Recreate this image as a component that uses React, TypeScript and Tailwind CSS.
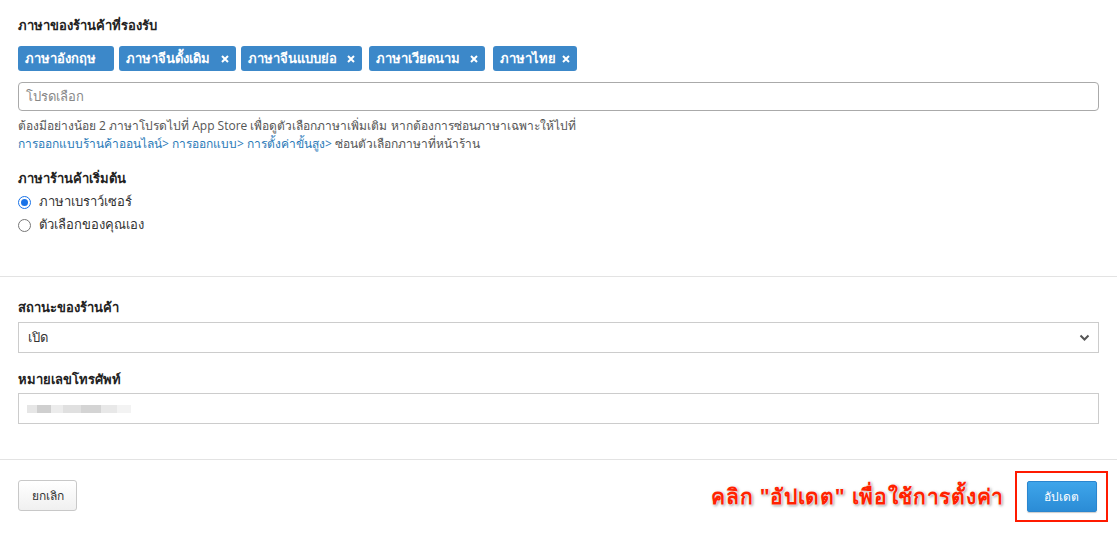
import React from "react";

const tags = [
  { label: "ภาษาอังกฤษ", removable: false, w: "w-[96px]", ml: "ml-0" },
  { label: "ภาษาจีนดั้งเดิม", removable: true, w: "w-[117px]", ml: "ml-[5px]" },
  { label: "ภาษาจีนแบบย่อ", removable: true, w: "w-[121px]", ml: "ml-[5px]" },
  { label: "ภาษาเวียดนาม", removable: true, w: "w-[116px]", ml: "ml-[7px]" },
  { label: "ภาษาไทย", removable: true, w: "w-[84px]", ml: "ml-[8px]" },
];

export default function App() {
  return (
    <div
      className="w-[1117px] h-[533px] bg-white text-[#333] overflow-hidden"
      style={{ fontFamily: '"Open Sans", "Noto Sans", sans-serif' }}
    >
      {/* Section 1 */}
      <div className="pl-[18px] pr-[18px] pt-[16px] h-[276px]">
        <div className="text-[13px] font-bold leading-[18px] text-[#222]">ภาษาของร้านค้าที่รองรับ</div>
        <div className="mt-[12px] flex h-[25px]">
          {tags.map((t, i) => (
            <div
              key={i}
              className={`${t.w} ${t.ml} h-[25px] rounded-[3px] bg-[#3c88c9] text-white text-[13px] font-semibold flex items-center pl-[7px] pr-[7px] justify-between`}
            >
              <span>{t.label}</span>
              {t.removable && (
                <svg width="8" height="8" viewBox="0 0 8 8">
                  <path d="M1 1 L7 7 M7 1 L1 7" stroke="#fff" strokeWidth="2" />
                </svg>
              )}
            </div>
          ))}
        </div>
        <div className="mt-[11px] h-[29px] w-[1081px] rounded-[4px] border border-[#aaa] flex items-center px-[7px] text-[13px] text-[#888]">
          โปรดเลือก
        </div>
        <div className="mt-[6px] text-[12px] leading-[18px] text-[#555]">
          <div>ต้องมีอย่างน้อย 2 ภาษาโปรดไปที่ App Store เพื่อดูตัวเลือกภาษาเพิ่มเติม หากต้องการซ่อนภาษาเฉพาะให้ไปที่</div>
          <div>
            <span className="text-[#2a7ab8]">การออกแบบร้านค้าออนไลน์&gt; การออกแบบ&gt; การตั้งค่าขั้นสูง&gt;</span> ซ่อนตัวเลือกภาษาที่หน้าร้าน
          </div>
        </div>
        <div className="mt-[16px] text-[13px] font-bold leading-[18px] text-[#222]">ภาษาร้านค้าเริ่มต้น</div>
        <div className="mt-[6px] flex flex-col gap-[5px] text-[13px]">
          <label className="flex items-center gap-[8px] h-[18px]">
            <span className="w-[13px] h-[13px] rounded-full border-[1.5px] border-[#1a73e8] flex items-center justify-center">
              <span className="w-[7px] h-[7px] rounded-full bg-[#1a73e8]" />
            </span>
            <span>ภาษาเบราว์เซอร์</span>
          </label>
          <label className="flex items-center gap-[8px] h-[18px]">
            <span className="w-[13px] h-[13px] rounded-full border border-[#777]" />
            <span>ตัวเลือกของคุณเอง</span>
          </label>
        </div>
      </div>
      <div className="h-px bg-[#e3e3e3]" />
      {/* Section 2 */}
      <div className="pl-[18px] pr-[18px] pt-[21px] h-[182px]">
        <div className="text-[13px] font-bold leading-[18px] text-[#222]">สถานะของร้านค้า</div>
        <div className="mt-[6px] h-[31px] w-[1081px] border border-[#ccc] flex items-center justify-between pl-[9px] pr-[8px] text-[13px]">
          <span>เปิด</span>
          <svg width="11" height="8" viewBox="0 0 11 8">
            <path d="M1.5 1.5 L5.5 5.5 L9.5 1.5" fill="none" stroke="#555" strokeWidth="2" />
          </svg>
        </div>
        <div className="mt-[17px] text-[13px] font-bold leading-[18px] text-[#222]">หมายเลขโทรศัพท์</div>
        <div className="mt-[5px] h-[31px] w-[1081px] border border-[#ccc] flex items-center pl-[8px]">
          <div className="flex h-[10px] items-center">
            <div className="w-[10px] h-[8px] bg-[#e6e6e6]" />
            <div className="w-[14px] h-[8px] bg-[#cfcfcf]" />
            <div className="w-[12px] h-[8px] bg-[#ececec]" />
            <div className="w-[18px] h-[8px] bg-[#e0e0e0]" />
            <div className="w-[20px] h-[8px] bg-[#d4d4d4]" />
            <div className="w-[16px] h-[8px] bg-[#e8e8e8]" />
            <div className="w-[14px] h-[8px] bg-[#f3f3f3]" />
          </div>
        </div>
      </div>
      <div className="h-px bg-[#e3e3e3]" />
      {/* Footer */}
      <div className="pl-[18px] pr-[18px] pt-[11px] flex items-start justify-between">
        <button className="mt-[9px] w-[59px] h-[31px] rounded-[3px] border border-[#c8c8c8] bg-gradient-to-b from-[#ffffff] to-[#f0f0f0] text-[12px] text-[#333]">
          ยกเลิก
        </button>
        <div className="flex items-center gap-[11px]">
          <span className="text-[21px] font-bold text-[#ff2200] tracking-[0.7px] [text-shadow:0_0_2px_#fff,0_0_2px_#fff,1px_1px_3px_#777]">
            คลิก "อัปเดต" เพื่อใช้การตั้งค่า
          </span>
          <div className="w-[93px] h-[51px] border-[2px] border-[#ff1a00] flex items-center justify-center -mr-[9px]">
            <button className="w-[70px] h-[31px] rounded-[2px] bg-gradient-to-b from-[#3ea5ea] to-[#2b8cd6] border border-[#2a86cf] text-white text-[12px] shadow-[0_1px_1px_rgba(0,0,0,0.2)]">
              อัปเดต
            </button>
          </div>
        </div>
      </div>
    </div>
  );
}
